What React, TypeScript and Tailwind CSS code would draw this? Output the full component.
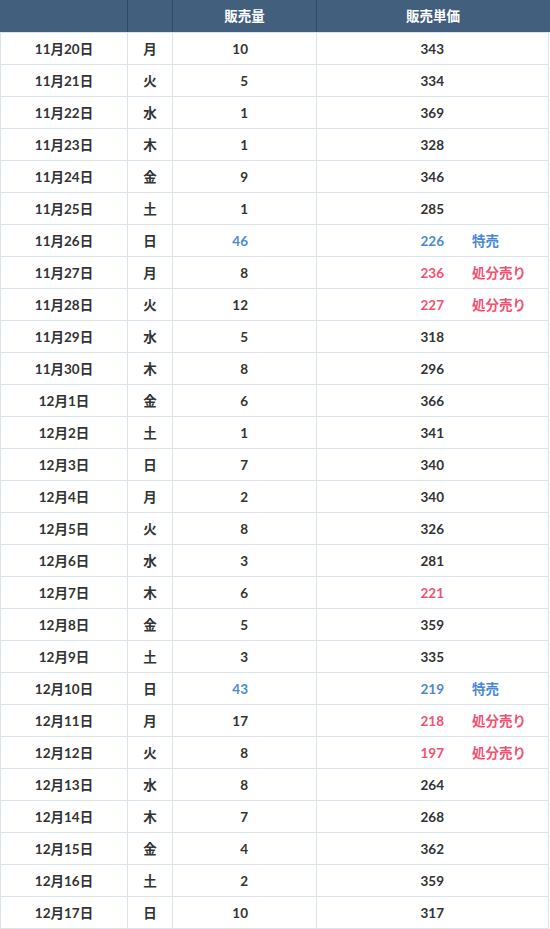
type Row = {
  date: string;
  day: string;
  qty: number;
  price: number;
  note?: "sale" | "clear" | "low";
};

const rows: Row[] = [
  { date: "11月20日", day: "月", qty: 10, price: 343 },
  { date: "11月21日", day: "火", qty: 5, price: 334 },
  { date: "11月22日", day: "水", qty: 1, price: 369 },
  { date: "11月23日", day: "木", qty: 1, price: 328 },
  { date: "11月24日", day: "金", qty: 9, price: 346 },
  { date: "11月25日", day: "土", qty: 1, price: 285 },
  { date: "11月26日", day: "日", qty: 46, price: 226, note: "sale" },
  { date: "11月27日", day: "月", qty: 8, price: 236, note: "clear" },
  { date: "11月28日", day: "火", qty: 12, price: 227, note: "clear" },
  { date: "11月29日", day: "水", qty: 5, price: 318 },
  { date: "11月30日", day: "木", qty: 8, price: 296 },
  { date: "12月1日", day: "金", qty: 6, price: 366 },
  { date: "12月2日", day: "土", qty: 1, price: 341 },
  { date: "12月3日", day: "日", qty: 7, price: 340 },
  { date: "12月4日", day: "月", qty: 2, price: 340 },
  { date: "12月5日", day: "火", qty: 8, price: 326 },
  { date: "12月6日", day: "水", qty: 3, price: 281 },
  { date: "12月7日", day: "木", qty: 6, price: 221, note: "low" },
  { date: "12月8日", day: "金", qty: 5, price: 359 },
  { date: "12月9日", day: "土", qty: 3, price: 335 },
  { date: "12月10日", day: "日", qty: 43, price: 219, note: "sale" },
  { date: "12月11日", day: "月", qty: 17, price: 218, note: "clear" },
  { date: "12月12日", day: "火", qty: 8, price: 197, note: "clear" },
  { date: "12月13日", day: "水", qty: 8, price: 264 },
  { date: "12月14日", day: "木", qty: 7, price: 268 },
  { date: "12月15日", day: "金", qty: 4, price: 362 },
  { date: "12月16日", day: "土", qty: 2, price: 359 },
  { date: "12月17日", day: "日", qty: 10, price: 317 },
];

const cols = "grid grid-cols-[128px_45px_144px_232px]";

const App: React.FC = () => {
  return (
    <div
      className="w-[550px] bg-white text-[13.5px] font-bold text-[#333]"
      style={{ fontFamily: 'Lato, "Noto Sans CJK JP", sans-serif' }}
    >
      <div className={`${cols} h-[33px] bg-[#42607d] text-white border-b border-[#dbe3ec]`}>
        <div className="border-r border-[#2c4b6b]" />
        <div className="border-r border-[#2c4b6b]" />
        <div className="flex items-center justify-center pt-[1px] border-r border-[#2c4b6b]">販売量</div>
        <div className="flex items-center justify-center pt-[1px]">販売単価</div>
      </div>

      {rows.map((r) => {
        const qtyColor = r.note === "sale" ? "text-[#4a88d6]" : "";
        const priceColor =
          r.note === "sale"
            ? "text-[#4a88d6]"
            : r.note === "clear" || r.note === "low"
            ? "text-[#f5506f]"
            : "";
        return (
          <div key={r.date} className={`${cols} h-[32px]`}>
            <div className="flex items-center justify-center pt-[2px] border-l border-r border-b border-[#dbe3ec]">
              {r.date}
            </div>
            <div className="flex items-center justify-center pt-[2px] border-r border-b border-[#dbe3ec]">
              {r.day}
            </div>
            <div className={`flex items-center justify-end pt-[2px] pr-[68px] border-r border-b border-[#dbe3ec] ${qtyColor}`}>
              {r.qty}
            </div>
            <div className="flex items-center pt-[2px] border-r border-b border-[#dbe3ec]">
              <span className={`w-[127px] text-right ${priceColor}`}>{r.price}</span>
              {r.note === "sale" && <span className="ml-[28px] text-[#4a88d6]">特売</span>}
              {r.note === "clear" && <span className="ml-[28px] text-[#f5506f]">処分売り</span>}
            </div>
          </div>
        );
      })}
    </div>
  );
};

export default App;
